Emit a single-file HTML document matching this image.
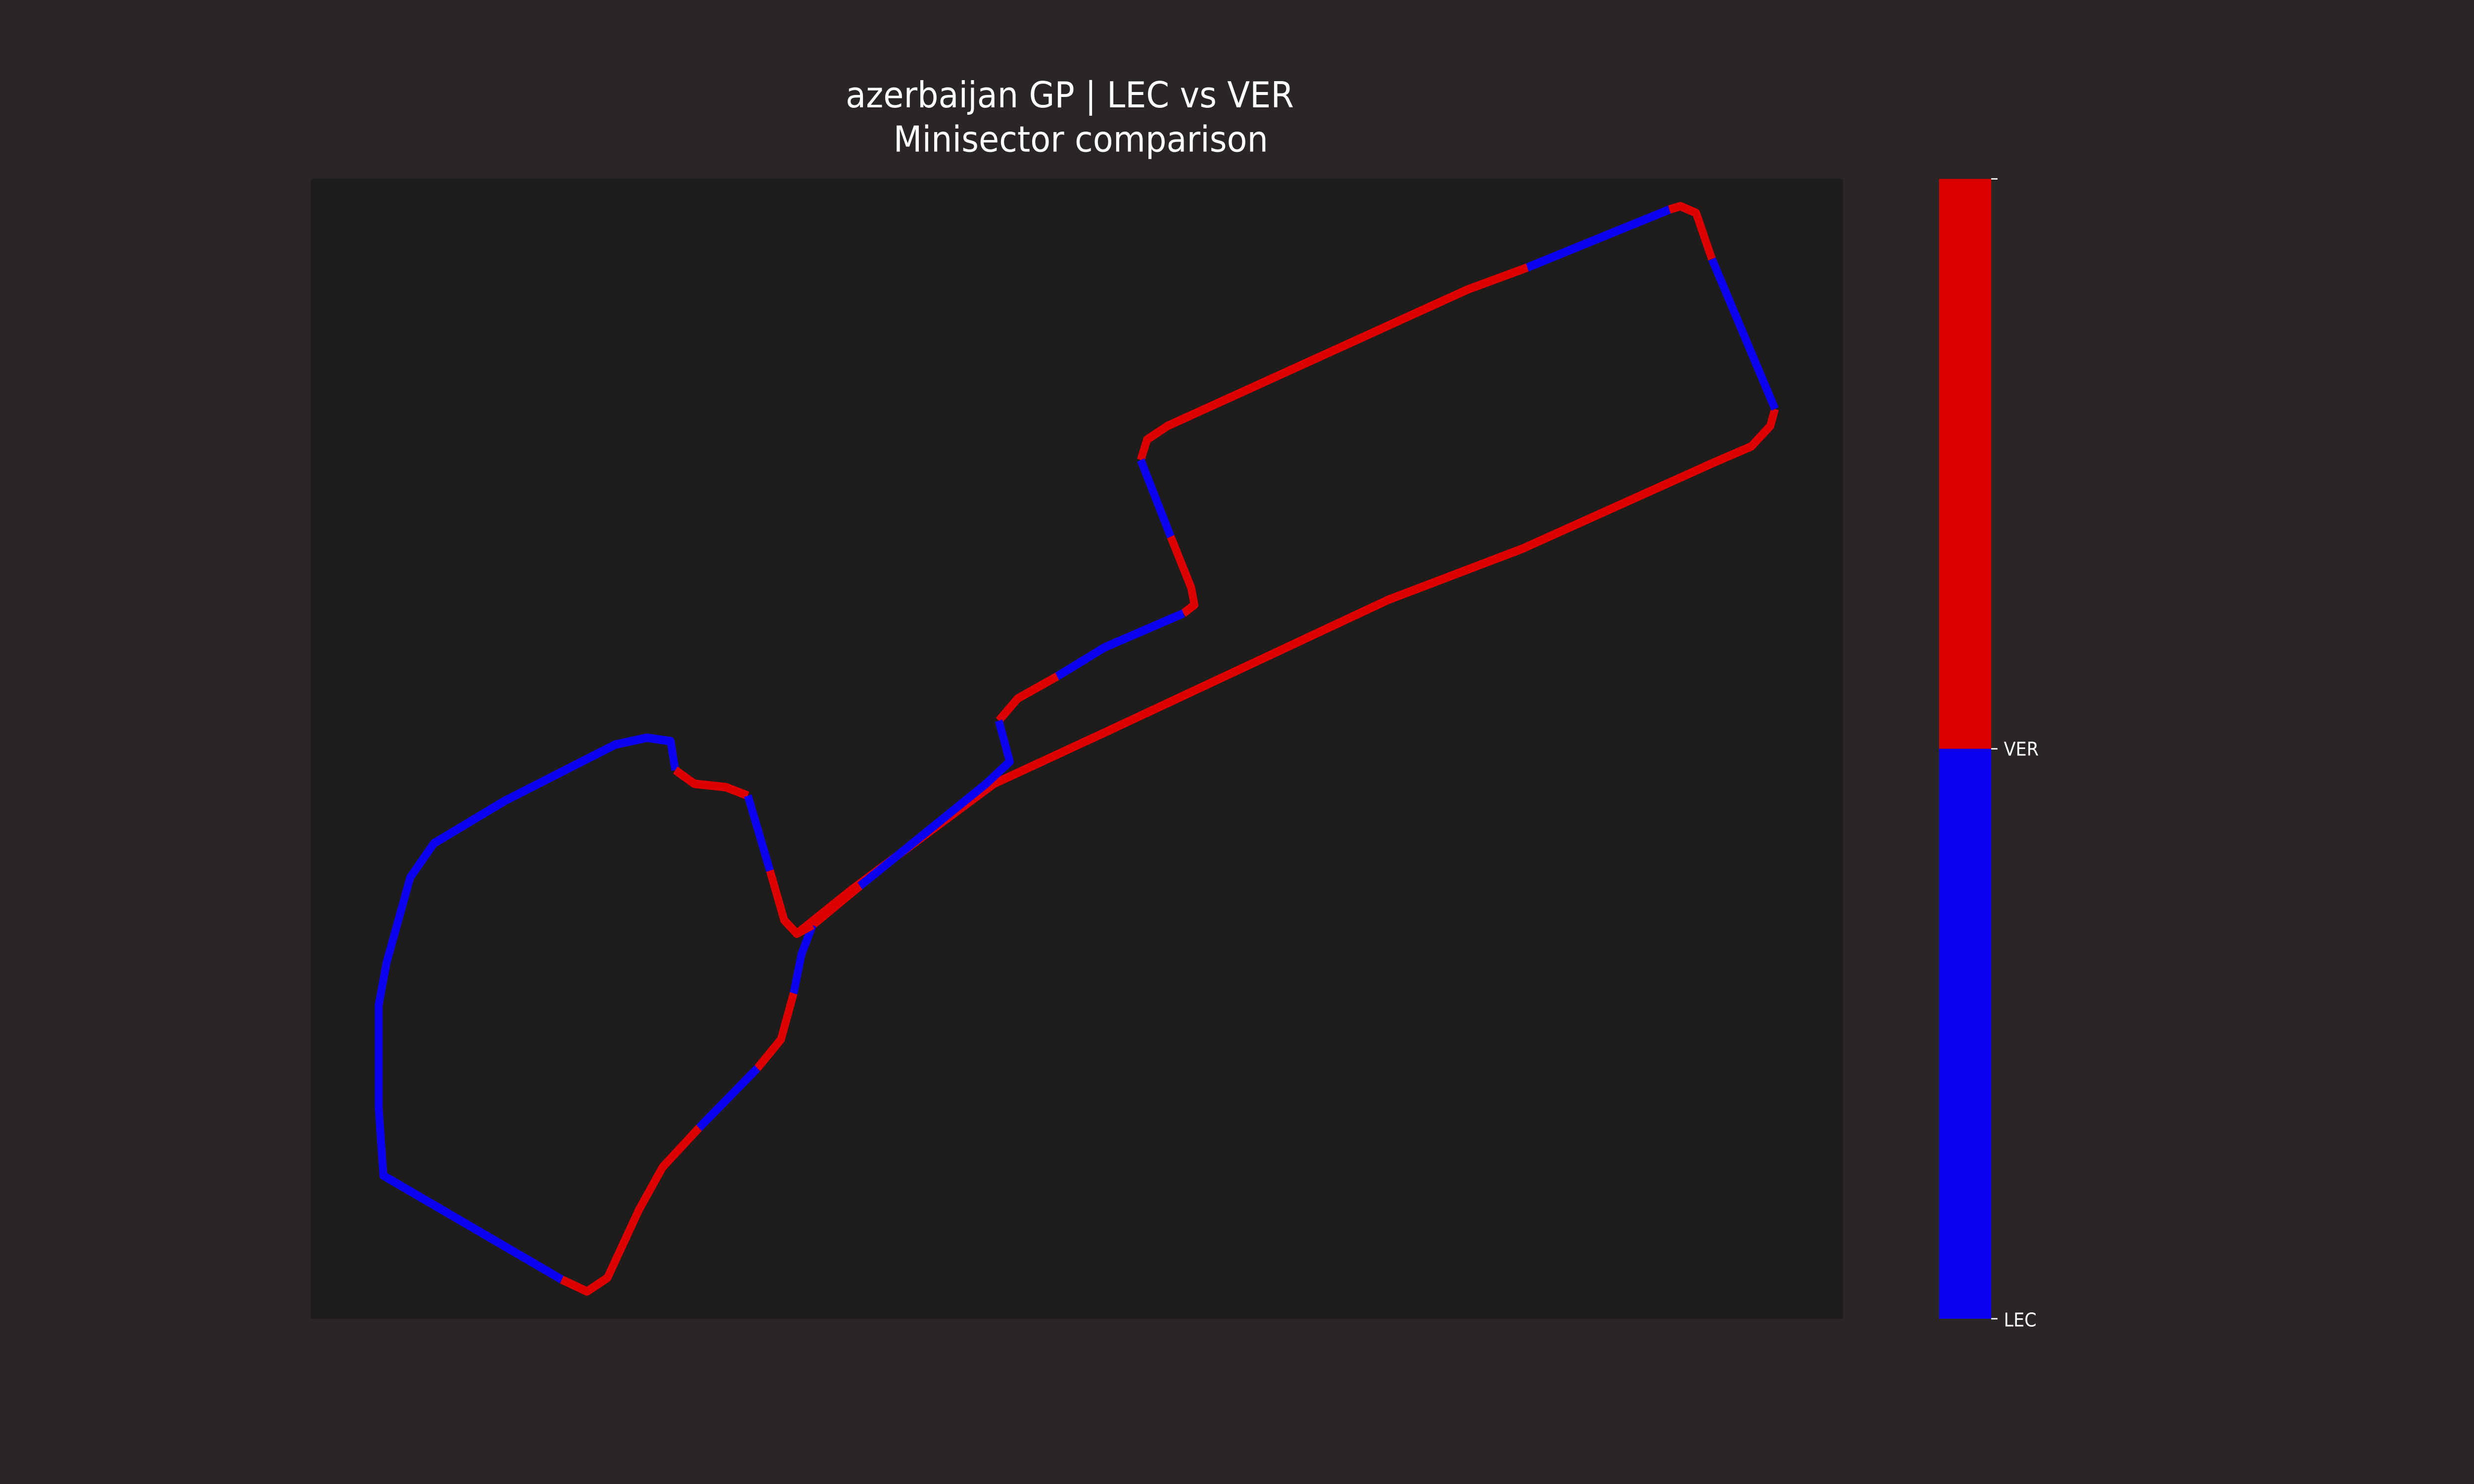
<!DOCTYPE html>
<html><head><meta charset="utf-8"><style>
html,body{margin:0;padding:0;background:#292625;width:100%;height:100%;overflow:hidden;}
svg{display:block;position:fixed;left:0;top:0;width:100vw;height:100vh;}
</style></head><body>
<svg viewBox="0 0 1568 871" preserveAspectRatio="none" xmlns="http://www.w3.org/2000/svg">
<rect x="0" y="0" width="1568" height="871" fill="#292625"/>
<rect x="197" y="105" width="971" height="669" fill="#1e1d1c"/>
<text x="678" y="63" font-family="DejaVu Sans, Liberation Sans, sans-serif" font-size="21" fill="#ffffff" text-anchor="middle">azerbaijan GP | LEC vs VER</text>
<text x="685" y="89" font-family="DejaVu Sans, Liberation Sans, sans-serif" font-size="21" fill="#ffffff" text-anchor="middle">Minisector comparison</text>
<g fill="none" stroke-width="5" stroke-linecap="butt" stroke-linejoin="round">
<polyline stroke="#dc0000" points="505,548 540,522 630,460 700,430 880,352 965,322 1085,272 1110,262 1122,250 1125,240"/>
<polyline stroke="#0b00f0" points="1125,240 1085,152"/>
<polyline stroke="#dc0000" points="1085,152 1075,125 1065,121 1058,123"/>
<polyline stroke="#0b00f0" points="1058,123 968,157"/>
<polyline stroke="#dc0000" points="968,157 930,170 740,250 727,258 723,270"/>
<polyline stroke="#0b00f0" points="723,270 742,315"/>
<polyline stroke="#dc0000" points="742,315 755,345 757,355 750,360"/>
<polyline stroke="#0b00f0" points="750,360 700,380 670,397"/>
<polyline stroke="#dc0000" points="670,397 645,410 633,423"/>
<polyline stroke="#0b00f0" points="633,423 640,447 625,460 545,520"/>
<polyline stroke="#dc0000" points="545,520 515,543"/>
<polyline stroke="#0b00f0" points="515,543 508,560 503,583"/>
<polyline stroke="#dc0000" points="503,583 495,610 480,627"/>
<polyline stroke="#0b00f0" points="480,627 443,662"/>
<polyline stroke="#dc0000" points="443,662 420,685 405,710 385,750 372,758 356,751"/>
<polyline stroke="#0b00f0" points="356,751 243,690 240,650 240,590 245,565 260,515 275,495 320,470 390,437 410,433 425,435 428,452"/>
<polyline stroke="#dc0000" points="428,452 440,460 460,462 474,467"/>
<polyline stroke="#0b00f0" points="474,467 488,511"/>
<polyline stroke="#dc0000" points="488,511 497,540 505,548 515,543"/>
</g>
<rect x="1229" y="105" width="33" height="334.5" fill="#dc0000"/>
<rect x="1229" y="439.5" width="33" height="334.5" fill="#0b00f0"/>
<g stroke="#ffffff" stroke-width="0.8">
<line x1="1262" y1="105" x2="1266" y2="105"/>
<line x1="1262" y1="439.5" x2="1266" y2="439.5"/>
<line x1="1262" y1="774" x2="1266" y2="774"/>
</g>
<text x="1270" y="443.5" font-family="DejaVu Sans, Liberation Sans, sans-serif" font-size="11" fill="#ffffff">VER</text>
<text x="1270" y="778.5" font-family="DejaVu Sans, Liberation Sans, sans-serif" font-size="11" fill="#ffffff">LEC</text>
</svg>
</body></html>
